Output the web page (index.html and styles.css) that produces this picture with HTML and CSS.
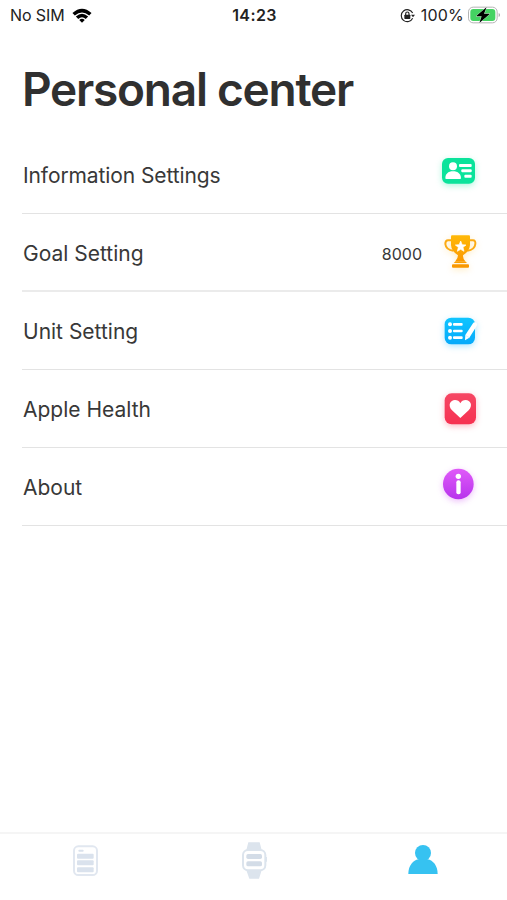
FILE: index.html
```html
<!DOCTYPE html>
<html lang="en">
<head>
<meta charset="utf-8">
<title>Personal center</title>
<link rel="stylesheet" href="styles.css">
</head>
<body>
<div class="screen">
  <header class="status">
    <div class="status-left">
      <span class="carrier">No SIM</span>
      <svg class="wifi" viewBox="2 1 56 44">
        <path d="M2 16Q30-9 58 16L51 23Q30 5 9 23Z"/>
        <path d="M12 26Q30 10 48 26L41 33Q30 23 19 33Z"/>
        <path d="M22 36Q30 29 38 36L30 44Z"/>
      </svg>
    </div>
    <span class="time">14:23</span>
    <div class="status-right">
      <svg class="lock" viewBox="0 0 45 45">
        <path class="ring" d="M38 15A18 18 0 1 0 38 31"/>
        <path d="M33 20H45L39 28Z"/>
        <rect x="13" y="20" width="18" height="13" rx="2"/>
        <path class="shackle" d="M17 21V17a5 5 0 0 1 10 0V21"/>
      </svg>
      <span class="percent">100%</span>
      <svg class="battery" viewBox="0 0 99 54">
        <rect class="case" x="1.500" y="3.500" width="86" height="47" rx="14"/>
        <rect class="charge" x="7" y="9" width="75" height="36" rx="9"/>
        <path class="nub" d="M92 21q4 2 4 6t-4 6z"/>
        <path class="bolt" d="M56 3L24 31H41L34 51L66 23H48Z"/>
      </svg>
    </div>
  </header>

  <h1>Personal center</h1>

  <main class="menu">
    <div class="row">
      <span class="label info-label">Information Settings</span>
      <svg class="icon green" viewBox="0 0 180 180">
        <rect x="36" y="39" width="99" height="77" rx="18" fill="#0be39b"/>
        <g fill="#fff">
          <circle cx="69" cy="64" r="12"/>
          <path d="M46 100C46 87 54 79 69 79S93 87 93 100Q93 102 90 102H49Q46 102 46 100Z"/>
          <rect x="87" y="57" width="38" height="9" rx="3"/>
          <rect x="94" y="73" width="31" height="9" rx="3"/>
          <rect x="103" y="89" width="22" height="9" rx="3"/>
        </g>
      </svg>
    </div>
    <div class="row thick">
      <span class="label">Goal Setting</span>
      <span class="value">8000</span>
      <svg class="icon orange" viewBox="0 -9 180 180">
        <defs><linearGradient id="gold" x1="0" y1="0" x2="0" y2="1"><stop offset="0" stop-color="#ffb908"/><stop offset="1" stop-color="#fb9800"/></linearGradient></defs>
        <g fill="none" stroke="#fcab14" stroke-width="6">
          <path d="M66 46H54Q46 46 46 57Q48 75 70 77"/>
          <path d="M118 46H129Q137 46 136 57Q134 75 112 77"/>
        </g>
        <path fill="url(#gold)" d="M66 31H117Q120 31 120 35V60Q119 78 99 91Q98 101 107 110H75Q84 101 84 91Q64 78 63 60V35Q63 31 66 31Z"/>
        <rect x="66" y="118" width="51" height="10" rx="3" fill="#f99800"/>
        <path d="M75 110H107L111 114H71Z" fill="#f9a000"/>
        <path fill="#fff" stroke="#fff" stroke-width="2" stroke-linejoin="round" d="M92 48L96.500 59L108 60L99 67L102 79L92 73L82 79L85 67L76 60L87.500 59Z"/>
      </svg>
    </div>
    <div class="row">
      <span class="label">Unit Setting</span>
      <svg class="icon blue" viewBox="0 -12 180 180">
        <defs><linearGradient id="sky" x1="0" y1="0" x2="0" y2="1"><stop offset="0" stop-color="#10c5ff"/><stop offset="1" stop-color="#06a9fa"/></linearGradient></defs>
        <rect x="44" y="38" width="91" height="80" rx="20" fill="url(#sky)"/>
        <g fill="#fff">
          <circle cx="60" cy="58" r="6"/><rect x="69" y="54" width="29" height="8" rx="3"/>
          <circle cx="60" cy="78" r="6"/><rect x="69" y="74" width="29" height="8" rx="3"/>
          <circle cx="60" cy="98" r="6"/><rect x="69" y="94" width="29" height="8" rx="3"/>
          <path d="M106 90L128 56Q132 50 139 53Q144 57 140 63L118 98L105 106Z"/>
        </g>
        <path d="M106 91L118 98" stroke="#bfeaff" stroke-width="2"/>
      </svg>
    </div>
    <div class="row">
      <span class="label">Apple Health</span>
      <svg class="icon red" viewBox="0 -18 180 180">
        <defs><linearGradient id="rose" x1="0" y1="0" x2="0" y2="1"><stop offset="0" stop-color="#f64663"/><stop offset="1" stop-color="#f63151"/></linearGradient></defs>
        <rect x="44" y="25" width="94" height="93" rx="21" fill="url(#rose)"/>
        <path fill="#fff" d="M91 99L66 76C52 61 61 45 75 45Q86 45 91 55Q96 45 107 45C121 45 130 61 116 76Z"/>
      </svg>
    </div>
    <div class="row">
      <span class="label">About</span>
      <svg class="icon purple" viewBox="0 216 180 180">
        <defs><linearGradient id="violet" x1="0" y1="0" x2="0" y2="1"><stop offset="0" stop-color="#e05af9"/><stop offset="1" stop-color="#b734ec"/></linearGradient></defs>
        <circle cx="85" cy="297" r="46" fill="url(#violet)"/>
        <circle cx="85" cy="274" r="8" fill="#fff"/>
        <rect x="79" y="286" width="13" height="42" rx="6" fill="#fff"/>
      </svg>
    </div>
  </main>

  <nav class="tabs">
    <svg class="tab" viewBox="0 3 180 198">
      <rect x="57" y="40" width="69" height="86" rx="13" fill="#fff" stroke="#e1e7f0" stroke-width="6"/>
      <g fill="#dae2ed"><rect x="70" y="50" width="16" height="6" rx="3"/><rect x="66" y="62" width="50" height="15" rx="3"/><rect x="66" y="82" width="50" height="15" rx="3"/><rect x="66" y="103" width="50" height="15" rx="3"/></g>
    </svg>
    <svg class="tab" viewBox="0 3 180 198">
      <path fill="#dce4ed" d="M73 28H107L113 51H67ZM67 112H113L105 137H76Z"/>
      <rect x="57" y="51" width="67" height="61" rx="15" fill="#fff" stroke="#dce4ed" stroke-width="6"/>
      <path fill="#dce4ed" d="M124 72h5v14h-5z"/>
      <g fill="#d3dce7"><rect x="67" y="63" width="47" height="15" rx="5"/><rect x="67" y="85" width="47" height="15" rx="5"/></g>
    </svg>
    <svg class="tab" viewBox="0 3 180 198">
      <g fill="#36c2f1"><circle cx="90" cy="60" r="24"/><path d="M46 123C46 97 61 82 76 79H104C120 82 134 98 134 123Z"/></g>
    </svg>
  </nav>
</div>
</body>
</html>
```
FILE: styles.css
```css
* { box-sizing: border-box; }
body {
  margin: 0;
  background: #fff;
  font-family: Inter, "Liberation Sans", sans-serif;
  color: #383838;
}
.screen {
  height: 900px;
  display: flex;
  flex-direction: column;
  overflow: hidden;
}
svg { display: block; flex: none; }
.status {
  height: 30px;
  padding: 0 6px 0 10px;
  display: grid;
  grid-template-columns: 1fr auto 1fr;
  align-items: center;
  font-size: 16px;
  line-height: 30px;
  color: #222;
}
.status-left, .status-right { display: flex; align-items: center; }
.status-right { justify-content: flex-end; }
.carrier { letter-spacing: -0.1px; }
.wifi { width: 20px; height: 15px; margin-left: 7px; fill: #000; }
.time { font-weight: 600; letter-spacing: 0.4px; margin-left: -2px; }
.lock { width: 15px; height: 15px; margin-right: 6px; fill: #222; }
.ring, .shackle { fill: none; stroke: #222; stroke-width: 3.5; }
.percent { letter-spacing: 0.2px; margin-right: 4px; }
.battery { width: 33px; height: 18px; }
.case { fill: #fff; stroke: #b4b4b4; stroke-width: 3; }
.charge { fill: #44d362; }
.nub { fill: #aaa; }
.bolt { fill: #000; stroke: #fff; stroke-width: 2; paint-order: stroke; }
h1 {
  margin: 29px 0 17px 22px;
  height: 60px;
  font-size: 46px;
  line-height: 60px;
  font-weight: 600;
  letter-spacing: -1.25px;
  white-space: nowrap;
  color: #303030;
}
.menu { flex: 1; }
.row {
  height: 78px;
  margin-left: 22px;
  padding-right: 17px;
  border-bottom: 1px solid #e3e3e3;
  display: flex;
  align-items: center;
}
.thick { border-bottom: 2px solid #ebebeb; }
.label {
  flex: 1;
  padding: 2px 0 0 1px;
  font-size: 21px;
  line-height: 28px;
}
.thick .label { padding-top: 3px; }
.info-label { letter-spacing: -0.1px; }
.value { font-size: 16px; margin-right: 8px; padding-top: 3px; }
.icon { width: 60px; height: 60px; }
.green { filter: drop-shadow(0 2px 3px #0be39b55); }
.orange { filter: drop-shadow(0 2px 3px #ffae0040); }
.blue { filter: drop-shadow(0 2px 3px #10b5ff55); }
.red { filter: drop-shadow(0 2px 3px #f6315155); }
.purple { filter: drop-shadow(0 2px 3px #c83cf155); }
.tabs {
  height: 68px;
  border-top: 2px solid #f5f5f5;
  display: grid;
  grid-template-columns: repeat(3, 1fr);
  justify-items: center;
}
.tab { width: 60px; height: 66px; }
```
